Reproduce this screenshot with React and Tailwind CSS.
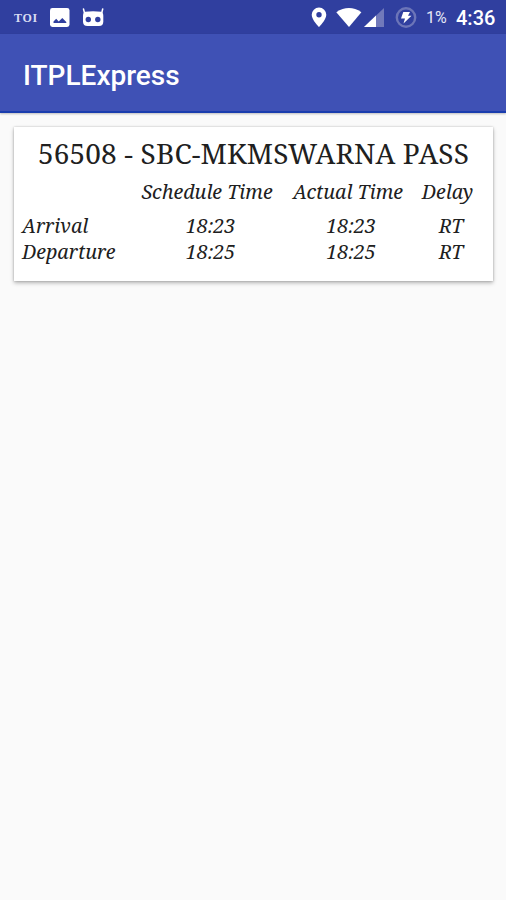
const rows = [
  { label: "Arrival", schedule: "18:23", actual: "18:23", delay: "RT", h: "h-[27px]" },
  { label: "Departure", schedule: "18:25", actual: "18:25", delay: "RT", h: "h-[26px]" },
];

function StatusBar() {
  return (
    <div className="flex h-[34px] items-center bg-[#303f9f] pl-[14px] pr-[11px] pt-px text-white">
      <span className="w-[25px] font-['Liberation_Serif',serif] text-[12px] font-bold leading-none tracking-[0.7px] text-[#d9dcf2]">TOI</span>
      <svg className="ml-[11px] h-5 w-5" viewBox="0 0 20 20">
        <rect x="0" y="0" width="19.500" height="19" rx="2.400" fill="#fff" />
        <path d="M3.500 15v-1.500l2.700-2.700 2.500 2.700L12.300 10l4 4v1z" fill="#303f9f" />
      </svg>
      <svg className="ml-[12px] h-5 w-[23px]" viewBox="0 0 23 20">
        <path d="M1.500 1 2.500 5M20.700 1 19.700 5" stroke="#fff" strokeWidth="1.500" strokeLinecap="round" />
        <path d="M3 3.800Q11 2.600 19.200 3.800Q21.300 4.500 21.300 8v5.500Q21.300 18 17 18h-11.500Q1 18 1 13.500V8Q1 4.500 3 3.800z" fill="#fff" />
        <circle cx="6.300" cy="11.500" r="2.700" fill="#303f9f" />
        <circle cx="15.800" cy="11.500" r="2.700" fill="#303f9f" />
      </svg>
      <svg className="ml-auto h-[21px] w-4" viewBox="0 0 16 21">
        <path fillRule="evenodd" d="M8 .5a7.300 7.300 0 0 0-7.300 7.300C.7 13 8 20 8 20S15.300 13 15.300 7.800A7.300 7.300 0 0 0 8 .5zm0 4.600a2.700 2.700 0 1 1 0 5.400 2.700 2.700 0 0 1 0-5.400z" fill="#fff" />
      </svg>
      <svg className="ml-[9px] h-5 w-[26px]" viewBox="0 0 26 20">
        <path d="M.3 4.200Q13-4.200 25.400 4.200L13 19z" fill="#fff" />
      </svg>
      <svg className="ml-[2px] h-5 w-5" viewBox="0 0 20 20">
        <path d="M20 0v19H0z" fill="#7179ba" />
        <path d="M12 7.600v11.400H0z" fill="#fff" />
      </svg>
      <svg className="ml-[11px] h-[22px] w-[22px]" viewBox="0 0 22 22">
        <circle cx="11" cy="10.500" r="9.200" fill="none" stroke="#6c75b8" strokeWidth="2.400" />
        <path d="M8.300 5h6.700l-2 3.800h3.500L8.500 16.500l1.500-5H6z" fill="#fff" />
      </svg>
      <span className="ml-[9px] w-[22px] whitespace-nowrap font-[Roboto,sans-serif] text-[16px] leading-none text-[#e4e6f5]">1%</span>
      <span className="ml-[8px] w-[39px] whitespace-nowrap font-[Roboto,sans-serif] text-[20px] font-medium leading-none">4:36</span>
    </div>
  );
}

export default function App() {
  return (
    <div className="flex h-[900px] w-[506px] flex-col overflow-hidden bg-[#fafafa]">
      <StatusBar />
      <header className="flex h-[79px] shrink-0 items-center border-b-2 border-[#1a3dae] bg-[#3f51b5] pl-[23px] pt-[6px] shadow-[0_1px_2px_rgba(0,0,0,0.25)]">
        <h1 className="whitespace-nowrap font-[Roboto,sans-serif] text-[28px] font-medium leading-none text-white">ITPLExpress</h1>
      </header>
      <main className="px-[14px] pt-[14px]">
        <section className="h-[154px] w-[479px] bg-white pt-[8px] font-['Noto_Serif','DejaVu_Serif',serif] text-[#202020] shadow-[0_2px_4px_rgba(0,0,0,0.28),0_0_2px_rgba(0,0,0,0.2)]">
          <h2 className="flex h-[36px] items-center justify-center whitespace-nowrap text-[28px] leading-none tracking-[0.15px]">56508 - SBC-MKMSWARNA PASS</h2>
          <div className="grid h-[41px] grid-cols-[112px_146px_136px_63px] items-center whitespace-nowrap pl-[8px] pt-px text-center text-[19.7px] italic leading-none">
            <span />
            <span>Schedule Time</span>
            <span>Actual Time</span>
            <span>Delay</span>
          </div>
          {rows.map((r) => (
            <div key={r.label} className={`grid grid-cols-[120px_137px_144px_56px] items-center whitespace-nowrap pl-[8px] text-center text-[19.7px] italic leading-none ${r.h}`}>
              <span className="text-left">{r.label}</span>
              <span>{r.schedule}</span>
              <span>{r.actual}</span>
              <span>{r.delay}</span>
            </div>
          ))}
        </section>
      </main>
    </div>
  );
}
